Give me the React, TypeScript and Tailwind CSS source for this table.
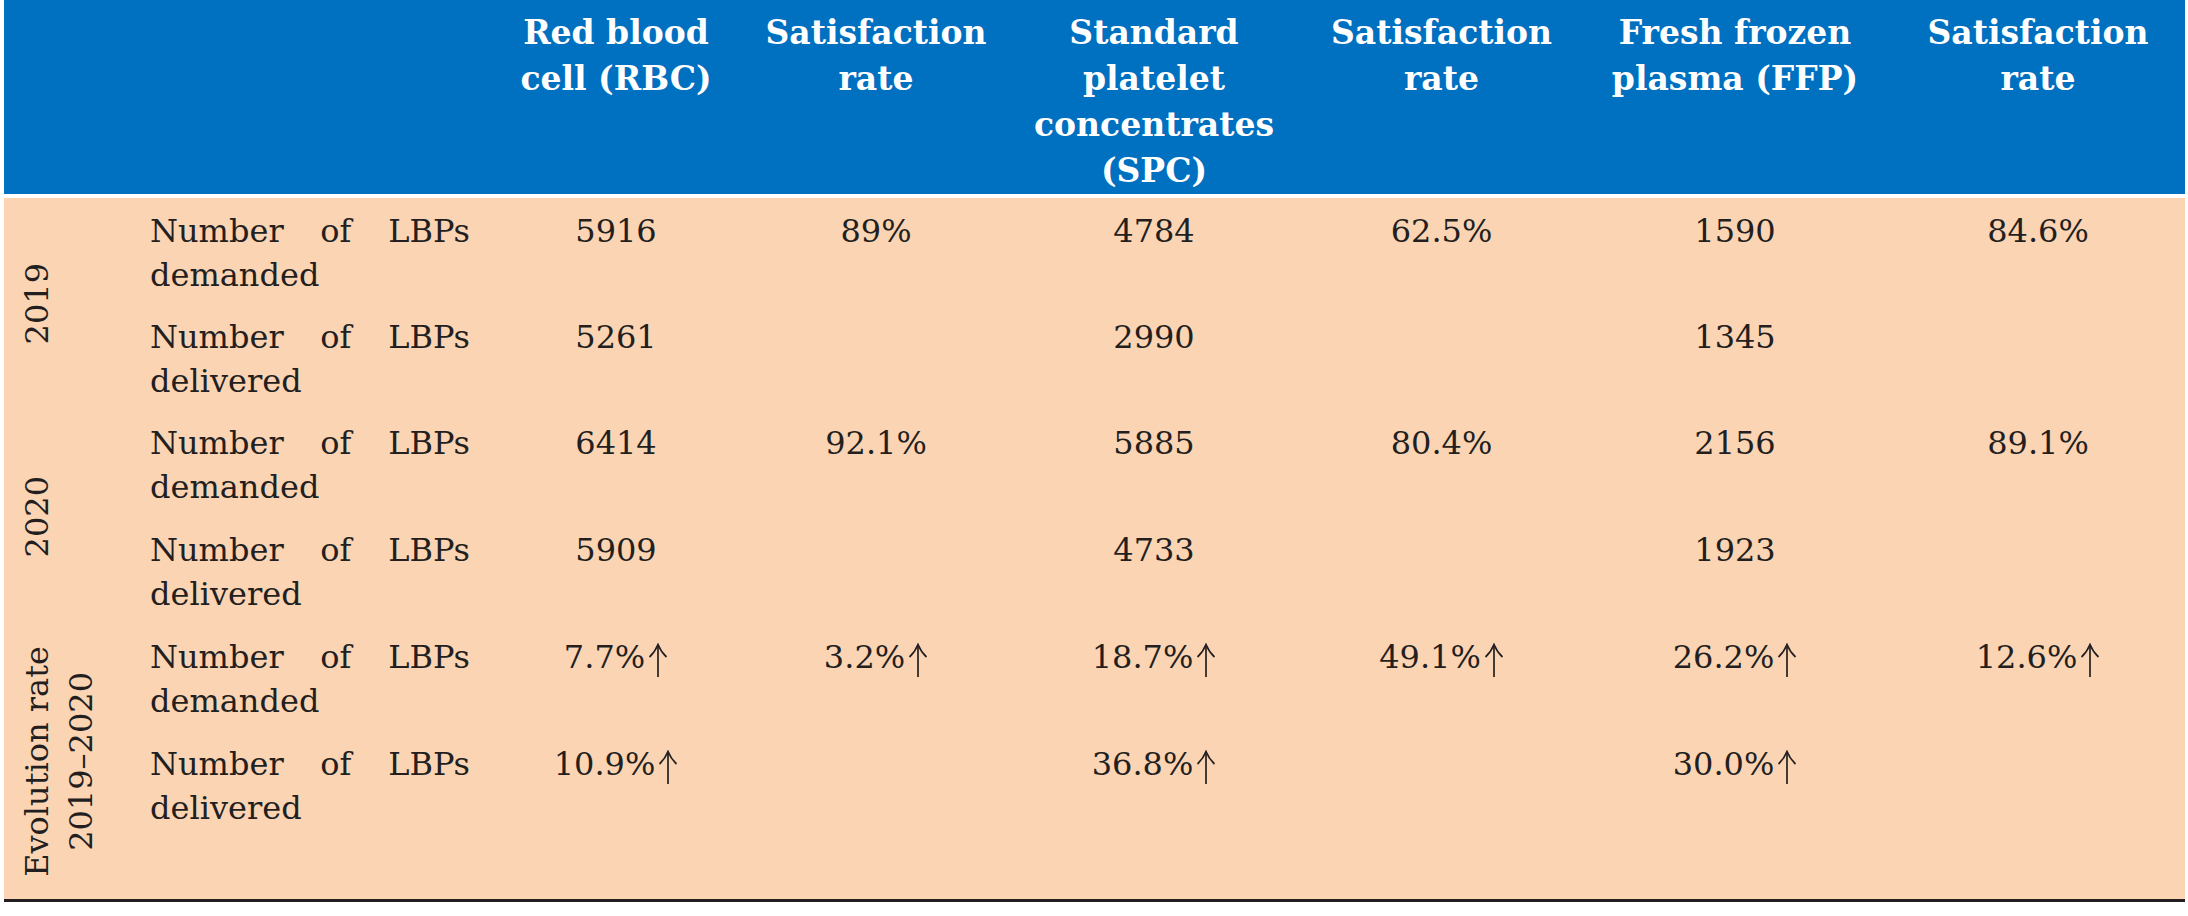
import React from 'react';

// Blood product supply table: demanded vs delivered LBPs, 2019–2020

const serif = "font-['DejaVu_Serif','Liberation_Serif',serif]";

const headers = [
  '',
  '',
  'Red blood cell (RBC)',
  'Satisfaction rate',
  'Standard platelet concentrates (SPC)',
  'Satisfaction rate',
  'Fresh frozen plasma (FFP)',
  'Satisfaction rate',
];

type Row = { label: string; values: string[]; up?: boolean };

const rows: Row[] = [
  { label: 'Number of LBPs demanded', values: ['5916', '89%', '4784', '62.5%', '1590', '84.6%'] },
  { label: 'Number of LBPs delivered', values: ['5261', '', '2990', '', '1345', ''] },
  { label: 'Number of LBPs demanded', values: ['6414', '92.1%', '5885', '80.4%', '2156', '89.1%'] },
  { label: 'Number of LBPs delivered', values: ['5909', '', '4733', '', '1923', ''] },
  { label: 'Number of LBPs demanded', values: ['7.7%', '3.2%', '18.7%', '49.1%', '26.2%', '12.6%'], up: true },
  { label: 'Number of LBPs delivered', values: ['10.9%', '', '36.8%', '', '30.0%', ''], up: true },
];

function UpArrow() {
  return (
    <svg
      width="20"
      height="34"
      viewBox="0 0 20 34"
      className="inline-block ml-[3px]"
      aria-label="increase"
    >
      <path d="M10 2 V34" stroke="#231f20" strokeWidth="1.7" fill="none" />
      <path d="M1.5 14 Q7 9 10 1.5 Q13 9 18.5 14" stroke="#231f20" strokeWidth="1.7" fill="none" />
    </svg>
  );
}

function YearCell({ rowClass, children }: { rowClass: string; children: React.ReactNode }) {
  return (
    <div className={`${rowClass} col-start-1 flex items-center pl-[11px]`}>
      <div className="[writing-mode:vertical-rl] rotate-180 text-center text-[32px] leading-[44px]">
        {children}
      </div>
    </div>
  );
}

export default function App() {
  const rowStarts = ['row-start-1', 'row-start-2', 'row-start-3', 'row-start-4', 'row-start-5', 'row-start-6'];

  return (
    <div className={`w-[2188px] h-[916px] bg-white pl-[4px] ${serif}`}>
      <div className="w-[2181px]">
        {/* header */}
        <div className="grid grid-cols-[132px_348px_264px_256px_300px_275px_312px_294px] h-[194px] bg-[#0070c0]">
          {headers.map((h, i) => (
            <div
              key={i}
              className="px-[8px] pt-[10px] text-center text-white font-bold text-[33px] leading-[46px]"
            >
              {h}
            </div>
          ))}
        </div>

        {/* body */}
        <div className="mt-[4px] grid grid-cols-[132px_348px_264px_256px_300px_275px_312px_294px] grid-rows-[106px_106px_107px_107px_107px_168px] bg-[#fbd4b4] text-[#231f20] border-b-[3px] border-[#231f20]">
          <YearCell rowClass="row-start-1 row-span-2">2019</YearCell>
          <YearCell rowClass="row-start-3 row-span-2">2020</YearCell>
          <YearCell rowClass="row-start-5 row-span-2">
            Evolution rate
            <br />
            2019–2020
          </YearCell>

          {rows.map((r, ri) => (
            <React.Fragment key={ri}>
              <div
                className={`${rowStarts[ri]} col-start-2 pl-[14px] pr-[14px] pt-[11px] text-[32px] leading-[44px] text-justify`}
              >
                {r.label}
              </div>
              {r.values.map((v, vi) => (
                <div
                  key={vi}
                  className={`${rowStarts[ri]} pt-[11px] text-center text-[32px] leading-[44px] whitespace-nowrap`}
                  style={{ gridColumnStart: vi + 3 }}
                >
                  {v}
                  {v && r.up ? <UpArrow /> : null}
                </div>
              ))}
            </React.Fragment>
          ))}
        </div>
      </div>
    </div>
  );
}
